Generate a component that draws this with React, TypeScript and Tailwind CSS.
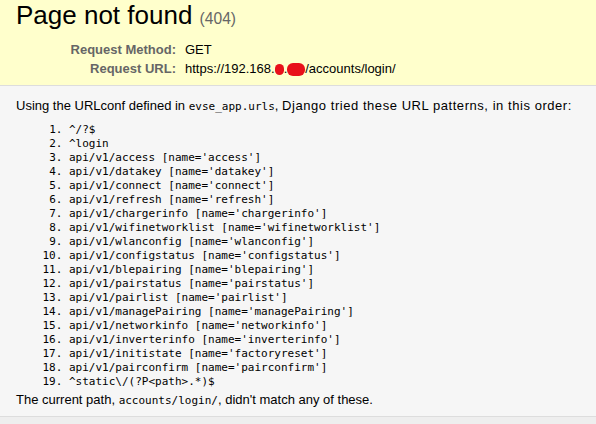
const patterns = [
  "^/?$",
  "^login",
  "api/v1/access [name='access']",
  "api/v1/datakey [name='datakey']",
  "api/v1/connect [name='connect']",
  "api/v1/refresh [name='refresh']",
  "api/v1/chargerinfo [name='chargerinfo']",
  "api/v1/wifinetworklist [name='wifinetworklist']",
  "api/v1/wlanconfig [name='wlanconfig']",
  "api/v1/configstatus [name='configstatus']",
  "api/v1/blepairing [name='blepairing']",
  "api/v1/pairstatus [name='pairstatus']",
  "api/v1/pairlist [name='pairlist']",
  "api/v1/managePairing [name='managePairing']",
  "api/v1/networkinfo [name='networkinfo']",
  "api/v1/inverterinfo [name='inverterinfo']",
  "api/v1/initistate [name='factoryreset']",
  "api/v1/pairconfirm [name='pairconfirm']",
  "^static\\/(?P<path>.*)$",
];

const sans = "font-['Liberation_Sans',Arial,sans-serif]";
const mono = "font-['DejaVu_Sans_Mono','Liberation_Mono',monospace]";

export default function App() {
  return (
    <div className={`min-h-[424px] w-[596px] overflow-hidden bg-[#eeeeee] text-[13px] text-black ${sans}`}>
      {/* summary */}
      <div className="border-b border-[#dddddd] bg-[#ffffcc] px-4 pb-[7px]">
        <h1 className="text-[26px] leading-[30px] font-normal">
          Page not found <span className="text-[15.6px] text-[#666]">(404)</span>
        </h1>
        <table className="mt-[6px] border-collapse leading-[19px]">
          <tbody>
            <tr>
              <th className="w-[169px] pr-[9px] text-right font-bold text-[#666]">Request Method:</th>
              <td>GET</td>
            </tr>
            <tr>
              <th className="w-[169px] pr-[9px] text-right font-bold text-[#666]">Request URL:</th>
              <td className="whitespace-nowrap">
                https://192.168.
                <span className="relative top-[2px] inline-block h-[11px] w-[9px] rounded-[5px] bg-[#e8101a]" />
                .
                <span className="relative top-[3px] inline-block h-[13px] w-[18px] rounded-[6px] bg-[#e8101a]" />
                /accounts/login/
              </td>
            </tr>
          </tbody>
        </table>
      </div>

      {/* info */}
      <div className="border-b border-[#dddddd] bg-[#f6f6f6] px-4 pt-[12px] pb-[8px]">
        <p className="leading-[15px] whitespace-nowrap">
          Using the URLconf defined in <code className={`${mono} text-[11px]`}>evse_app.urls</code>,{" "}
          <span className="tracking-[0.55px]">Django tried these URL patterns, in this order:</span>
        </p>
        <ol className={`mt-[9px] list-decimal pl-[53px] text-[11px] leading-[14px] ${mono}`}>
          {patterns.map((p) => (
            <li key={p} className="whitespace-pre">
              {p}
            </li>
          ))}
        </ol>
        <p className="mt-[3px] leading-[15px]">
          The current path, <code className={`${mono} text-[11px]`}>accounts/login/</code>, didn't match any of
          these.
        </p>
      </div>
    </div>
  );
}
